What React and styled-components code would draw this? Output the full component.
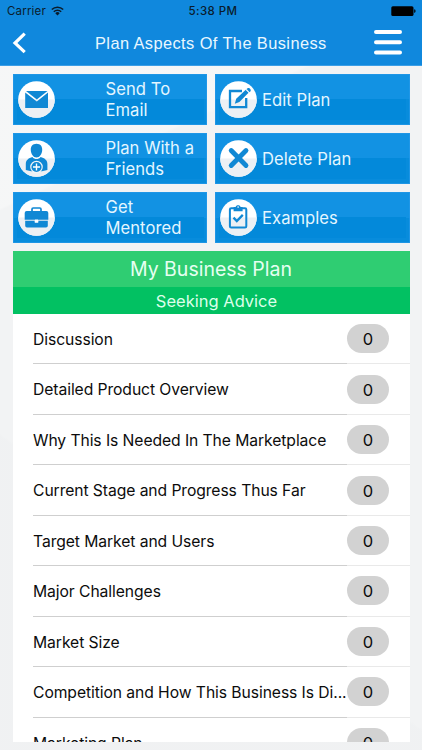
import React from 'react';
import styled, { createGlobalStyle } from 'styled-components';

const Global = createGlobalStyle`
  * { box-sizing: border-box; }
  body { margin: 0; overflow: hidden; }
`;

const Screen = styled.div`
  width: 422px;
  height: 750px;
  display: flex;
  flex-direction: column;
  font-family: Inter, 'Liberation Sans', sans-serif;
  background:
    linear-gradient(155deg, rgba(255, 255, 255, 0.3) 0 22%, transparent 22.3%),
    linear-gradient(35deg, rgba(234, 236, 238, 0.25) 0 30%, transparent 30.3%),
    #f2f3f4;
`;

const Header = styled.header`
  height: 65.5px;
  flex: none;
  background: #1088dd;
  border-bottom: 1px solid #3b9ee6;
`;

const StatusBar = styled.div`
  height: 22px;
  display: grid;
  grid-template-columns: 1fr auto 1fr;
  align-items: center;
  padding: 0 6px 0 7px;
  font-size: 11.5px;
  line-height: 22px;
  color: #0a1c2c;
`;

const Carrier = styled.div`
  display: flex;
  align-items: center;
  gap: 5px;
  letter-spacing: 0.17px;
`;

const Clock = styled.div`
  padding-left: 3px;
  font-weight: 500;
  letter-spacing: 0.45px;
`;

const Battery = styled.svg`
  justify-self: end;
  display: block;
`;

const NavBar = styled.nav`
  height: 42px;
  display: flex;
  align-items: center;
  padding: 0 20px 0 12px;
`;

const NavButton = styled.button`
  padding: 0;
  border: 0;
  background: none;
  display: flex;
`;

const Title = styled.h1`
  margin: 0 auto 0 67px;
  font: 400 16.4px/20px 'Liberation Sans', Arial, sans-serif;
  letter-spacing: 0.41px;
  color: #e9f7ff;
  white-space: nowrap;
`;

const Actions = styled.section`
  display: grid;
  grid-template-columns: 194.5px 194.5px;
  grid-auto-rows: 51px;
  gap: 8px;
  margin: 8px 0 0 12.5px;
`;

const Action = styled.button`
  display: flex;
  align-items: center;
  gap: ${(p) => (p.$wide ? '51px' : '5px')};
  padding: 0 0 0 5px;
  border: 0;
  box-shadow: inset 0 0 0 0.8px #2598e8;
  text-align: left;
  font: 400 16.6px/20.5px Inter, sans-serif;
  letter-spacing: 0.05px;
  color: #e4f6ff;
  background:
    linear-gradient(#0389da, #0389da) 4px 25px / 187px 21px no-repeat,
    linear-gradient(#1292e3 0 50%, #088cdc 50%);
`;

const ActionText = styled.span`
  width: 95px;
  padding-top: ${(p) => (p.$wide ? '1px' : '2px')};
  font-weight: 375;
`;

const Icon = styled.svg`
  display: block;
  flex: none;
`;

const Panel = styled.section`
  width: 397px;
  height: 491px;
  margin: 8px 0 0 12.5px;
  overflow: hidden;
  background: #fff;
`;

const PanelTitle = styled.h2`
  margin: 0;
  height: 36.5px;
  font-size: 19.5px;
  line-height: 37px;
  font-weight: 375;
  text-align: center;
  color: #e6fff1;
  background: #2fcd72;
`;

const PanelSubtitle = styled.h3`
  margin: 0;
  height: 26.5px;
  padding-left: 11px;
  font-size: 16.5px;
  line-height: 28px;
  font-weight: 375;
  text-align: center;
  color: #dcffea;
  background: #02c162;
`;

const List = styled.ul`
  list-style: none;
  margin: 0;
  padding: 0.5px 0 0 20.5px;
`;

const Row = styled.li`
  height: 50.44px;
  display: flex;
  align-items: center;
`;

const Label = styled.span`
  width: 314px;
  height: 100%;
  line-height: 51px;
  font-size: 15.7px;
  letter-spacing: -0.08px;
  white-space: nowrap;
  color: #0c0c0c;
  border-bottom: 1px solid #cfcfcf;
`;

const CountCell = styled.span`
  flex: 1;
  height: 100%;
  display: flex;
  align-items: center;
  border-bottom: 1px solid #e9e9e9;
`;

const Count = styled.span`
  width: 42px;
  height: 29px;
  border-radius: 15px;
  background: #d2d2d2;
  font-size: 16.5px;
  line-height: 30px;
  text-align: center;
  color: #0c0c0c;
`;

const BLUE = '#1088d4';

const glyphs = {
  mail: (
    <g fill={BLUE}>
      <path d="M8 10h21.5L18.8 18.5z" />
      <path d="M7.2 11.4l11.6 9.2L30 11.4V27H7.2z" />
    </g>
  ),
  edit: (
    <g>
      <path d="M22 10H10v16.2h16.2V17" fill="none" stroke={BLUE} strokeWidth="2.3" />
      <path d="M14.8 22.8l1.4-5L26 8.6l2.8 3-9.4 9.5z" fill={BLUE} />
      <path d="M27.3 7.4c1.6-1.5 4.6 1.3 3 3.1l-.7.7-3-3.1z" fill={BLUE} />
      <path d="M25.6 8.5l3.3 3.4" stroke="#fff" strokeWidth=".7" />
    </g>
  ),
  friend: (
    <g>
      <path d="M18.5 3.8c-4 0-6 2.8-5.7 6.4.3 4 2.5 7.2 5.7 7.2s5.4-3.2 5.7-7.2c.3-3.6-1.7-6.4-5.7-6.4z" fill={BLUE} />
      <path d="M7.8 30v-6c0-4 3-6 6.6-7 2 2.8 6.2 2.8 8.2 0 3.8 1 6.8 3 6.8 7v6q-11 3-21.6 0z" fill={BLUE} />
      <circle cx="18.5" cy="27" r="5.7" fill={BLUE} stroke="#f2f5f7" strokeWidth="1.2" />
      <path d="M18.5 23.5v7M15 27h7" stroke="#fff" strokeWidth="1.4" />
    </g>
  ),
  close: <path d="M11.2 10.5l14.8 15M26 10.5l-14.8 15" stroke={BLUE} strokeWidth="4.8" strokeLinecap="round" />,
  briefcase: (
    <g fill={BLUE}>
      <path d="M14 12v-1.8q0-1.2 1.2-1.2h6.6q1.2 0 1.2 1.2V12" fill="none" stroke={BLUE} strokeWidth="1.7" />
      <path d="M8.7 12h19.6q2 0 2 2v6.8H6.7V14q0-2 2-2z" />
      <path d="M7.2 21.7h9.4v1.8h3.8v-1.8h9.4v5q0 1.8-1.8 1.8H9q-1.8 0-1.8-1.8z" />
      <path d="M17 20.6h3v3h-3z" fill="#fff" />
    </g>
  ),
  clipboard: (
    <g fill="none" stroke={BLUE}>
      <rect x="9.9" y="9.3" width="16.4" height="19.2" rx="1.3" strokeWidth="2" />
      <path d="M13.6 8h2.1c0-2.5 4.8-2.5 4.8 0h2.1v4.3h-9z" fill={BLUE} stroke="none" />
      <circle cx="18.1" cy="8.1" r=".8" fill="#fff" stroke="none" />
      <path d="M13.5 18.6l3.3 3.5 6-6.2" strokeWidth="2.3" />
    </g>
  ),
};

function CircleIcon({ name }) {
  return (
    <Icon width="37" height="37" viewBox="0 0 37 37">
      <circle cx="18.5" cy="18.5" r="18.3" fill="#fff" />
      <path d="M.2 18.5a18.3 18.3 0 0 0 36.6 0z" fill="#ecf0f4" />
      {glyphs[name]}
    </Icon>
  );
}

const actions = [
  { icon: 'mail', text: 'Send To Email', wide: true },
  { icon: 'edit', text: 'Edit Plan' },
  { icon: 'friend', text: 'Plan With a Friends', wide: true },
  { icon: 'close', text: 'Delete Plan' },
  { icon: 'briefcase', text: 'Get Mentored', wide: true },
  { icon: 'clipboard', text: 'Examples' },
];

const rows = [
  'Discussion',
  'Detailed Product Overview',
  'Why This Is Needed In The Marketplace',
  'Current Stage and Progress Thus Far',
  'Target Market and Users',
  'Major Challenges',
  'Market Size',
  'Competition and How This Business Is Di...',
  'Marketing Plan',
];

export default function App() {
  return (
    <Screen>
      <Global />
      <Header>
        <StatusBar>
          <Carrier>
            Carrier
            <svg width="13" height="10" viewBox="0 0 13 10" fill="none" stroke="#0a1c2c">
              <path d="M.8 3.5a8.2 8.2 0 0 1 11.4 0" strokeWidth="1.6" />
              <path d="M2.8 5.7a5.3 5.3 0 0 1 7.4 0" strokeWidth="1.5" />
              <path d="M6.5 9.4L4.3 7.2a3.1 3.1 0 0 1 4.4 0z" fill="#0a1c2c" stroke="none" />
            </svg>
          </Carrier>
          <Clock>5:38 PM</Clock>
          <Battery width="25" height="11" viewBox="0 0 25 11">
            <rect x=".3" y=".2" width="22.2" height="9.8" rx="1.6" />
            <path d="M23.2 3.3q1.4.3 1.4 1.8t-1.4 1.8z" />
          </Battery>
        </StatusBar>
        <NavBar>
          <NavButton aria-label="Back">
            <svg width="16" height="22" viewBox="0 0 16 22">
              <path d="M12.7 1.6L3 11l9.7 9.2" fill="none" stroke="#fff" strokeWidth="3.2" />
            </svg>
          </NavButton>
          <Title>Plan Aspects Of The Business</Title>
          <NavButton aria-label="Menu">
            <svg width="28" height="26" viewBox="0 0 28 26">
              <path d="M2 2h24M2 12.2h24M2 22.4h24" stroke="#fff" strokeWidth="4" strokeLinecap="round" />
            </svg>
          </NavButton>
        </NavBar>
      </Header>
      <Actions>
        {actions.map((a) => (
          <Action key={a.text} $wide={a.wide}>
            <CircleIcon name={a.icon} />
            <ActionText $wide={a.wide}>{a.text}</ActionText>
          </Action>
        ))}
      </Actions>
      <Panel>
        <PanelTitle>My Business Plan</PanelTitle>
        <PanelSubtitle>Seeking Advice</PanelSubtitle>
        <List>
          {rows.map((r) => (
            <Row key={r}>
              <Label>{r}</Label>
              <CountCell>
                <Count>0</Count>
              </CountCell>
            </Row>
          ))}
        </List>
      </Panel>
    </Screen>
  );
}
